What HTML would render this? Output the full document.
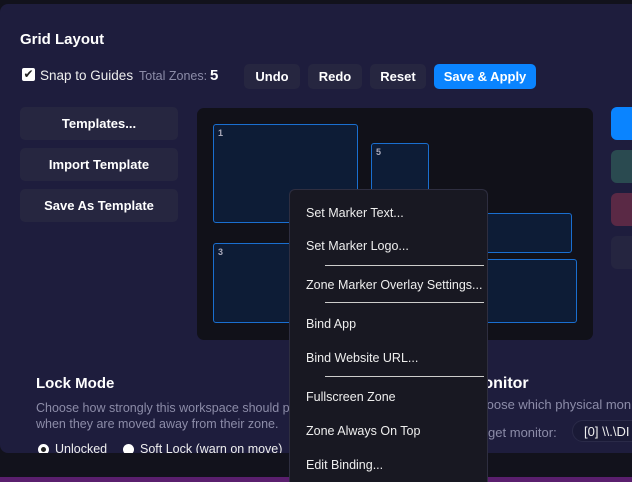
<!DOCTYPE html>
<html style="overflow:hidden;width:632px;height:482px"><head><style>
*{margin:0;padding:0;box-sizing:border-box}
body{width:632px;height:482px;overflow:hidden;background:#12121c;font-family:"Liberation Sans",sans-serif;position:relative;color:#fff}
.a{position:absolute}
.panel{left:0;top:4px;width:640px;height:449px;background:#1e1d3d;border-radius:8px}
.btn{position:absolute;background:#262640;border-radius:5px;color:#fff;font-weight:bold;font-size:13px;display:flex;align-items:center;justify-content:center}
.zone{position:absolute;background:#0d1c36;border:1px solid #1a6fd0;border-radius:3px;font-size:9px;font-weight:bold;color:#aab;padding:3px 0 0 4px}
.menu{left:289px;top:189px;width:199px;height:293px;background:#181822;border:1px solid #2e2e40;border-bottom:none;border-radius:6px 6px 0 0}
.mi{position:absolute;left:16px;font-size:12.5px;color:#eee}
.sep{position:absolute;left:35px;width:159px;height:1px;background:#ccc}
.t{font-size:12.5px;color:#8c8ca8}
</style></head><body>
<div class="a panel"></div>
<div class="a" style="left:20px;top:31px;font-size:15px;font-weight:bold">Grid Layout</div>
<div class="a" style="left:22px;top:68px;width:13px;height:13px;background:#fff;border-radius:2px;color:#222;font-size:12px;line-height:13px;text-align:center">✔</div>
<div class="a" style="left:40px;top:68px;font-size:13.5px;color:#eee">Snap to Guides</div>
<div class="a t" style="left:139px;top:69px">Total Zones:</div>
<div class="a" style="left:210px;top:67px;font-size:15px;font-weight:bold">5</div>
<div class="btn" style="left:244px;top:64px;width:56px;height:25px">Undo</div>
<div class="btn" style="left:308px;top:64px;width:54px;height:25px">Redo</div>
<div class="btn" style="left:370px;top:64px;width:56px;height:25px">Reset</div>
<div class="btn" style="left:434px;top:64px;width:102px;height:25px;background:#0a84ff">Save &amp; Apply</div>
<div class="btn" style="left:20px;top:107px;width:158px;height:33px">Templates...</div>
<div class="btn" style="left:20px;top:148px;width:158px;height:33px">Import Template</div>
<div class="btn" style="left:20px;top:189px;width:158px;height:33px">Save As Template</div>
<div class="a" style="left:197px;top:108px;width:396px;height:232px;background:#111119;border-radius:7px"></div>
<div class="zone" style="left:213px;top:124px;width:145px;height:99px">1</div>
<div class="zone" style="left:371px;top:143px;width:58px;height:80px">5</div>
<div class="zone" style="left:400px;top:213px;width:172px;height:40px"></div>
<div class="zone" style="left:213px;top:243px;width:150px;height:80px">3</div>
<div class="zone" style="left:420px;top:259px;width:157px;height:64px"></div>
<div class="a" style="left:611px;top:107px;width:30px;height:33px;background:#0a84ff;border-radius:6px"></div>
<div class="a" style="left:611px;top:150px;width:30px;height:33px;background:#2a4a50;border-radius:6px"></div>
<div class="a" style="left:611px;top:193px;width:30px;height:33px;background:#5a2945;border-radius:6px"></div>
<div class="a" style="left:611px;top:236px;width:30px;height:33px;background:#252540;border-radius:6px"></div>
<div class="a" style="left:36px;top:375px;font-size:15px;font-weight:bold">Lock Mode</div>
<div class="a t" style="left:36px;top:401px;white-space:nowrap">Choose how strongly this workspace should pro</div>
<div class="a t" style="left:36px;top:417px;white-space:nowrap">when they are moved away from their zone.</div>
<div class="a" style="left:38px;top:444px;width:11px;height:11px;border-radius:50%;background:#222;border:3px solid #fff"></div>
<div class="a" style="left:55px;top:442px;font-size:12.5px;color:#eee">Unlocked</div>
<div class="a" style="left:123px;top:444px;width:11px;height:11px;border-radius:50%;background:#fff"></div>
<div class="a" style="left:140px;top:442px;font-size:12.5px;color:#eee">Soft Lock (warn on move)</div>
<div class="a" style="left:470px;top:375px;font-size:16px;font-weight:bold">Monitor</div>
<div class="a t" style="left:470px;top:397px;white-space:nowrap;font-size:13px">Choose which physical monitor</div>
<div class="a t" style="left:470px;top:425px;white-space:nowrap;font-size:13px">Target monitor:</div>
<div class="a" style="left:572px;top:420px;width:80px;height:22px;border:1px solid #2a2a48;border-radius:11px;background:#1a1a36"></div>
<div class="a" style="left:584px;top:424px;font-size:13px;color:#eee">[0] \\.\DI</div>
<div class="a" style="left:0;top:453px;width:632px;height:24px;background:#12121c"></div>
<div class="a" style="left:0;top:477px;width:632px;height:5px;background:#5a1f6e"></div>
<div class="a menu">
<div class="mi" style="top:16px">Set Marker Text...</div>
<div class="mi" style="top:49px">Set Marker Logo...</div>
<div class="sep" style="top:75px"></div>
<div class="mi" style="top:88px">Zone Marker Overlay Settings...</div>
<div class="sep" style="top:112px"></div>
<div class="mi" style="top:127px">Bind App</div>
<div class="mi" style="top:161px">Bind Website URL...</div>
<div class="sep" style="top:186px"></div>
<div class="mi" style="top:200px">Fullscreen Zone</div>
<div class="mi" style="top:234px">Zone Always On Top</div>
<div class="mi" style="top:268px">Edit Binding...</div>
</div>
</body></html>
